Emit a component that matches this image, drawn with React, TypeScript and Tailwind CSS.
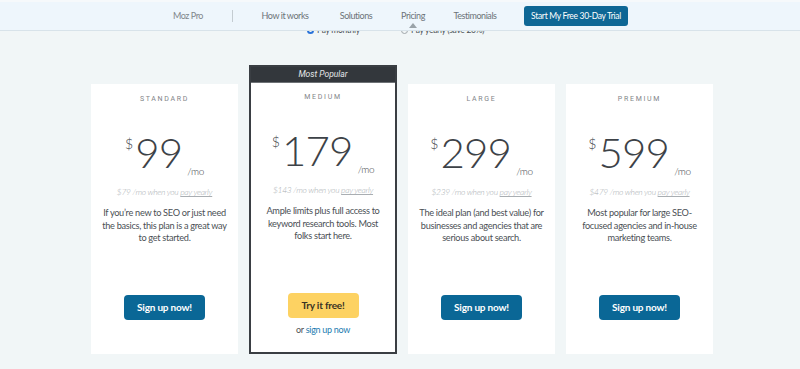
import React from "react";

type Plan = {
  name: string;
  price: string;
  yearly: string;
  blurb: string[];
  popular?: boolean;
};

const plans: Plan[] = [
  {
    name: "Standard",
    price: "99",
    yearly: "$79",
    blurb: ["If you’re new to SEO or just need", "the basics, this plan is a great way", "to get started."],
  },
  {
    name: "Medium",
    price: "179",
    yearly: "$143",
    blurb: ["Ample limits plus full access to", "keyword research tools. Most", "folks start here."],
    popular: true,
  },
  {
    name: "Large",
    price: "299",
    yearly: "$239",
    blurb: ["The ideal plan (and best value) for", "businesses and agencies that are", "serious about search."],
  },
  {
    name: "Premium",
    price: "599",
    yearly: "$479",
    blurb: ["Most popular for large SEO-", "focused agencies and in-house", "marketing teams."],
  },
];

function NavBar() {
  return (
    <div className="absolute left-0 top-0 z-10 flex h-[31px] w-full items-center border-b border-t-2 border-b-[#d8e3ea] border-t-[#f6f9fb] bg-[#eef6fc] pl-[170px] text-[9px] tracking-[-0.45px] whitespace-nowrap text-[#6c7378]">
      <span className="w-[36px] text-center text-[#80868b]">Moz Pro</span>
      <span className="ml-[26px] h-[12px] w-px bg-[#c4ccd1]" />
      <span className="ml-[28px] w-[48px] text-center">How it works</span>
      <span className="ml-[26px] w-[42px] text-center">Solutions</span>
      <span className="relative ml-[20px] w-[32px] text-center">
        Pricing
        <span className="absolute left-[12px] top-[14px] h-0 w-0 border-x-[4px] border-b-[5px] border-x-transparent border-b-[#9aa3a9]" />
      </span>
      <span className="ml-[20px] w-[52px] text-center">Testimonials</span>
      <button
        type="button"
        className="ml-[23px] h-[20px] w-[104px] rounded-[3px] bg-[#0e6795] text-[8.5px] tracking-[-0.3px] text-white"
      >
        Start My Free 30-Day Trial
      </button>
    </div>
  );
}

function PlanCard({ plan }: { plan: Plan }) {
  const body = (
    <div className="flex flex-col items-center text-center whitespace-nowrap">
      <div className="mt-[10px] text-[7px] leading-[10px] tracking-[1.7px] text-[#7f8488] uppercase [font-family:Roboto,sans-serif]">
        {plan.name}
      </div>
      <div className="mt-[27px] flex h-[43px] items-start text-[#3d4247]">
        <span className="mr-[2px] mt-[6px] text-[14px] leading-none font-light">$</span>
        <span className="text-[42px] leading-none font-light tracking-[-0.8px]">{plan.price}</span>
        <span className="mb-[-2px] ml-[5px] self-end text-[10px] leading-none font-light tracking-[-0.4px]">/mo</span>
      </div>
      <div className="mt-[12px] text-[8.5px] leading-[12px] font-light italic tracking-[-0.3px] text-[#a9aeb2]">
        {plan.yearly} /mo when you <span className="underline">pay yearly</span>
      </div>
      <div className="mt-[9px] h-[88px] text-[9.2px] leading-[12.6px] tracking-[-0.3px] text-[#4b5055]">
        {plan.blurb.map((line) => (
          <div key={line}>{line}</div>
        ))}
      </div>
      {plan.popular ? (
        <>
          <button
            type="button"
            className="h-[25px] w-[71px] rounded-[4px] bg-[#fdd262] text-[10px] font-bold tracking-[-0.2px] text-[#3a3325]"
          >
            Try it free!
          </button>
          <div className="mt-[6px] text-[9px] leading-[12px] tracking-[-0.3px] text-[#4b5055]">
            or <span className="text-[#1c7bb0]">sign up now</span>
          </div>
        </>
      ) : (
        <button
          type="button"
          className="h-[25px] w-[81px] rounded-[4px] bg-[#0a6796] text-[10px] font-bold tracking-[-0.2px] text-white"
        >
          Sign up now!
        </button>
      )}
    </div>
  );

  if (plan.popular) {
    return (
      <div className="h-[289px] w-[148px] border-2 border-[#3a3e43] bg-white">
        <div className="flex h-[16px] items-center justify-center border-b border-[#6e7276] bg-[#33373c] text-[8.5px] italic text-[#e4e6e8] [font-family:Roboto,sans-serif]">
          Most Popular
        </div>
        <div className="-mt-[1px]">{body}</div>
      </div>
    );
  }

  return <div className="h-[270px] w-[147px] bg-white">{body}</div>;
}

export default function App() {
  return (
    <div className="relative h-[369px] w-full overflow-hidden bg-[#f1f6f7] [font-family:Lato,'Noto_Sans',sans-serif]">
      <NavBar />
      <div className="flex items-center pl-[307px] pt-[24px] text-[8.5px] leading-[12px] tracking-[-0.3px] whitespace-nowrap text-[#4b5055]">
        <span className="mr-[3px] h-[7px] w-[7px] rounded-full border-[2.5px] border-[#2a73d9]" />
        <span className="w-[44px]">Pay monthly</span>
        <span className="ml-[40px] mr-[3px] h-[7px] w-[7px] rounded-full border border-[#a0a6aa]" />
        <span>Pay yearly (save 20%)</span>
      </div>
      <div className="mt-[29px] flex items-end justify-center gap-[11px] pl-[4px]">
        {plans.map((p) => (
          <PlanCard key={p.name} plan={p} />
        ))}
      </div>
    </div>
  );
}
